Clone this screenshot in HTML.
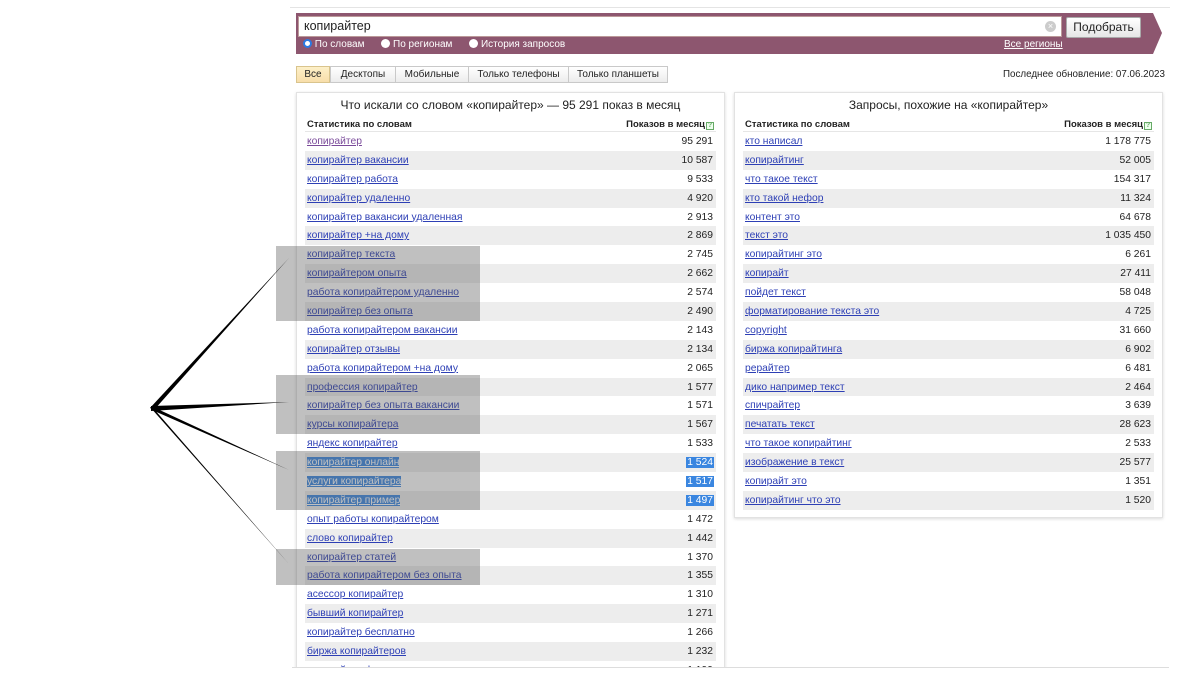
<!DOCTYPE html>
<html><head><meta charset="utf-8">
<style>
*{margin:0;padding:0;box-sizing:border-box}
html,body{width:1200px;height:675px;overflow:hidden}
body{background:#fff;position:relative;font-family:"Liberation Sans",Arial,sans-serif;font-size:11px;color:#222}
.abs{position:absolute}
a{color:#2d3fb5;text-decoration:underline}
.panel{position:absolute;background:#fff;border:1px solid #e2e2e2;box-shadow:0 1px 3px rgba(0,0,0,.15)}
.tbl{position:absolute;width:411px}
.hd{height:13px;font-weight:bold;font-size:9.5px;display:flex;justify-content:space-between;border-bottom:1px solid #e6e6e6;color:#222;padding:0 2px}
.q{display:inline-block;width:8px;height:8px;border:1px solid #6a6;font-size:7px;line-height:6px;text-align:center;color:#6a6;margin-left:1px;background:#efe}
.r{height:18.9px;display:flex;justify-content:space-between;align-items:center;padding:0 2px;font-size:10.3px}
.r span{padding:0 1px}
.sel a,.sel span.n{background:#3a86e0;color:#fff}
.tab{position:absolute;top:66px;height:17px;border:1px solid #c9c9c9;background:linear-gradient(#fff,#ececec);font-size:10px;text-align:center;line-height:15px}
.ov{position:absolute;left:276px;width:204px;background:rgba(90,90,90,.38)}
</style></head><body>
<div class="abs" style="left:290px;top:7px;width:880px;height:1px;background:#e4e4e4"></div>
<svg class="abs" style="left:294px;top:13px" width="870" height="42"><polygon points="2,0 859,0 868,20 859,41 2,41" fill="#8d566f"/></svg>
<div class="abs" style="left:298px;top:16px;width:764px;height:21px;background:#fff;border:1px solid #b99;font-size:12.5px;line-height:19px;padding-left:5px">копирайтер</div>
<div class="abs" style="left:1045px;top:21px;width:11px;height:11px;border-radius:50%;background:#ccc;color:#fff;font-size:9px;line-height:11px;text-align:center">×</div>
<div class="abs" style="left:1066px;top:17px;width:75px;height:21px;border:1px solid #aaa;border-radius:2px;background:linear-gradient(#fff,#e6e6e6);font-size:12px;text-align:center;line-height:19px">Подобрать</div>
<div class="abs" style="left:303px;top:39px;color:#fff;font-size:10px;white-space:nowrap">
<span style="display:inline-block;width:9px;height:9px;border-radius:50%;background:#fff;border:2px solid #2a7ae2;vertical-align:-1px"></span> По словам
<span style="display:inline-block;width:9px;height:9px;border-radius:50%;background:#fff;margin-left:14px;vertical-align:-1px"></span> По регионам
<span style="display:inline-block;width:9px;height:9px;border-radius:50%;background:#fff;margin-left:14px;vertical-align:-1px"></span> История запросов</div>
<div class="abs" style="left:1004px;top:39px;color:#fff;font-size:10px;text-decoration:underline">Все регионы</div>
<div class="tab" style="left:296px;width:34px;background:linear-gradient(#fdf0c8,#f8deaa);border-color:#d9c48d">Все</div>
<div class="tab" style="left:330px;width:66px">Десктопы</div>
<div class="tab" style="left:395px;width:74px">Мобильные</div>
<div class="tab" style="left:468px;width:101px">Только телефоны</div>
<div class="tab" style="left:568px;width:100px">Только планшеты</div>
<div class="abs" style="left:1003px;top:69px;font-size:9.8px;white-space:nowrap">Последнее обновление: 07.06.2023</div>

<div class="panel" style="left:296px;top:92px;width:429px;height:590px"></div>
<div class="panel" style="left:734px;top:92px;width:429px;height:426px"></div>
<div class="abs" style="left:296px;top:98px;width:429px;text-align:center;font-size:12px">Что искали со словом «копирайтер» — 95 291 показ в месяц</div>
<div class="abs" style="left:734px;top:98px;width:429px;text-align:center;font-size:12px">Запросы, похожие на «копирайтер»</div>

<div class="tbl" style="left:305px;top:119px">
<div class="hd"><span>Статистика по словам</span><span>Показов в месяц<span class="q">?</span></span></div>
<div>
<div class="r" style="background:#fff"><a style="color:#7a4a9a">копирайтер</a><span>95 291</span></div>
<div class="r" style="background:#ededed"><a>копирайтер вакансии</a><span>10 587</span></div>
<div class="r" style="background:#fff"><a>копирайтер работа</a><span>9 533</span></div>
<div class="r" style="background:#ededed"><a>копирайтер удаленно</a><span>4 920</span></div>
<div class="r" style="background:#fff"><a>копирайтер вакансии удаленная</a><span>2 913</span></div>
<div class="r" style="background:#ededed"><a>копирайтер +на дому</a><span>2 869</span></div>
<div class="r" style="background:#fff"><a>копирайтер текста</a><span>2 745</span></div>
<div class="r" style="background:#ededed"><a>копирайтером опыта</a><span>2 662</span></div>
<div class="r" style="background:#fff"><a>работа копирайтером удаленно</a><span>2 574</span></div>
<div class="r" style="background:#ededed"><a>копирайтер без опыта</a><span>2 490</span></div>
<div class="r" style="background:#fff"><a>работа копирайтером вакансии</a><span>2 143</span></div>
<div class="r" style="background:#ededed"><a>копирайтер отзывы</a><span>2 134</span></div>
<div class="r" style="background:#fff"><a>работа копирайтером +на дому</a><span>2 065</span></div>
<div class="r" style="background:#ededed"><a>профессия копирайтер</a><span>1 577</span></div>
<div class="r" style="background:#fff"><a>копирайтер без опыта вакансии</a><span>1 571</span></div>
<div class="r" style="background:#ededed"><a>курсы копирайтера</a><span>1 567</span></div>
<div class="r" style="background:#fff"><a>яндекс копирайтер</a><span>1 533</span></div>
<div class="r sel" style="background:#ededed"><a>копирайтер онлайн</a><span class="n">1 524</span></div>
<div class="r sel" style="background:#fff"><a>услуги копирайтера</a><span class="n">1 517</span></div>
<div class="r sel" style="background:#ededed"><a>копирайтер пример</a><span class="n">1 497</span></div>
<div class="r" style="background:#fff"><a>опыт работы копирайтером</a><span>1 472</span></div>
<div class="r" style="background:#ededed"><a>слово копирайтер</a><span>1 442</span></div>
<div class="r" style="background:#fff"><a>копирайтер статей</a><span>1 370</span></div>
<div class="r" style="background:#ededed"><a>работа копирайтером без опыта</a><span>1 355</span></div>
<div class="r" style="background:#fff"><a>асессор копирайтер</a><span>1 310</span></div>
<div class="r" style="background:#ededed"><a>бывший копирайтер</a><span>1 271</span></div>
<div class="r" style="background:#fff"><a>копирайтер бесплатно</a><span>1 266</span></div>
<div class="r" style="background:#ededed"><a>биржа копирайтеров</a><span>1 232</span></div>
<div class="r" style="background:#fff"><a>копирайтер фриланс</a><span>1 199</span></div>
</div></div>

<div class="tbl" style="left:743px;top:119px">
<div class="hd"><span>Статистика по словам</span><span>Показов в месяц<span class="q">?</span></span></div>
<div>
<div class="r" style="background:#fff"><a>кто написал</a><span>1 178 775</span></div>
<div class="r" style="background:#ededed"><a>копирайтинг</a><span>52 005</span></div>
<div class="r" style="background:#fff"><a>что такое текст</a><span>154 317</span></div>
<div class="r" style="background:#ededed"><a>кто такой нефор</a><span>11 324</span></div>
<div class="r" style="background:#fff"><a>контент это</a><span>64 678</span></div>
<div class="r" style="background:#ededed"><a>текст это</a><span>1 035 450</span></div>
<div class="r" style="background:#fff"><a>копирайтинг это</a><span>6 261</span></div>
<div class="r" style="background:#ededed"><a>копирайт</a><span>27 411</span></div>
<div class="r" style="background:#fff"><a>пойдет текст</a><span>58 048</span></div>
<div class="r" style="background:#ededed"><a>форматирование текста это</a><span>4 725</span></div>
<div class="r" style="background:#fff"><a>copyright</a><span>31 660</span></div>
<div class="r" style="background:#ededed"><a>биржа копирайтинга</a><span>6 902</span></div>
<div class="r" style="background:#fff"><a>рерайтер</a><span>6 481</span></div>
<div class="r" style="background:#ededed"><a>дико например текст</a><span>2 464</span></div>
<div class="r" style="background:#fff"><a>спичрайтер</a><span>3 639</span></div>
<div class="r" style="background:#ededed"><a>печатать текст</a><span>28 623</span></div>
<div class="r" style="background:#fff"><a>что такое копирайтинг</a><span>2 533</span></div>
<div class="r" style="background:#ededed"><a>изображение в текст</a><span>25 577</span></div>
<div class="r" style="background:#fff"><a>копирайт это</a><span>1 351</span></div>
<div class="r" style="background:#ededed"><a>копирайтинг что это</a><span>1 520</span></div>
</div></div>

<div class="abs" style="left:0;top:668px;width:1200px;height:7px;background:#fff"></div>
<div class="abs" style="left:292px;top:667px;width:877px;height:1px;background:#ddd"></div>

<div class="ov" style="top:246px;height:75px"></div>
<div class="ov" style="top:375px;height:59px"></div>
<div class="ov" style="top:451px;height:59px"></div>
<div class="ov" style="top:549px;height:36px"></div>

<svg class="abs" style="left:0;top:0" width="1200" height="675">
<polygon points="150,408 289,258 154,410" fill="#000"/>
<polygon points="151,406 289,402 151,411" fill="#000"/>
<polygon points="151,406 289,470 152,410" fill="#000"/>
<polygon points="150,407 289,564 154,409" fill="#000"/>
</svg>
</body></html>
